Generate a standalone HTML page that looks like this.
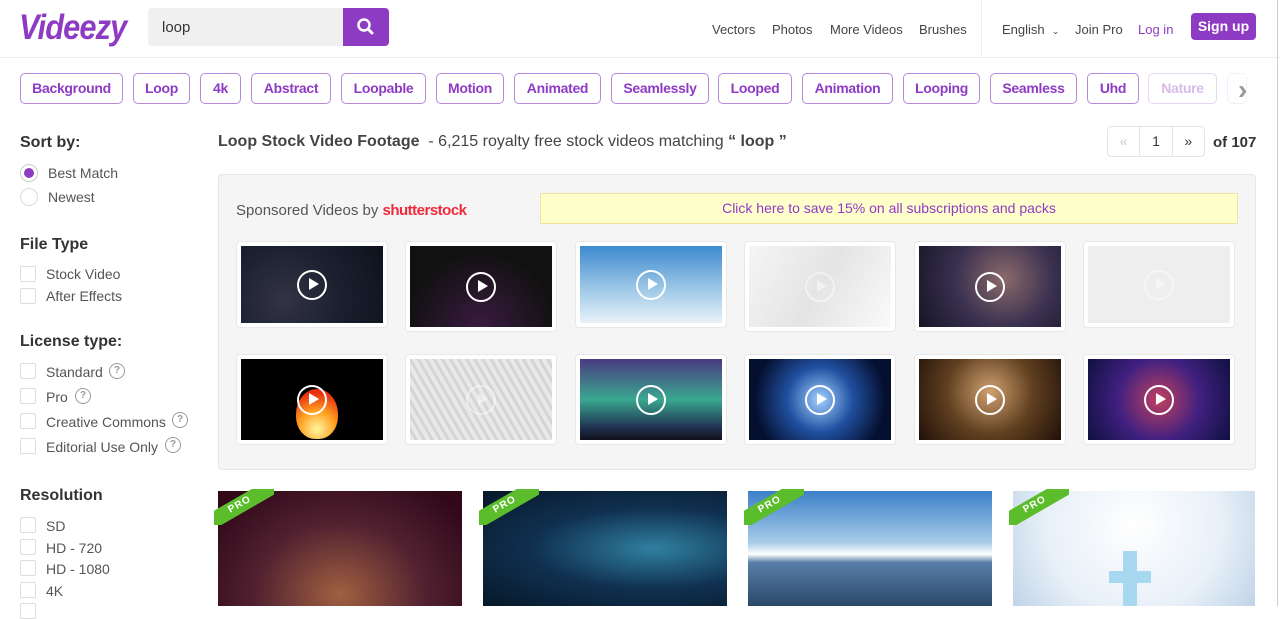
<!DOCTYPE html>
<html><head><meta charset="utf-8"><style>
*{box-sizing:border-box;margin:0;padding:0}
body{width:1280px;height:606px;overflow:hidden;background:#fff;font-family:"Liberation Sans",sans-serif;color:#444;position:relative}
.a{position:absolute}
.logo{left:19px;top:8px;font-size:35px;font-weight:bold;font-style:italic;color:#8e3bc4;letter-spacing:-1px;transform:scaleX(.88);transform-origin:left}
.search{left:148px;top:8px;width:196px;height:38px;background:#f0f0f0;border-radius:4px 0 0 4px;font-size:15px;color:#333;padding:11px 14px}
.sbtn{left:343px;top:8px;width:46px;height:38px;background:#8e3bc4;border-radius:0 4px 4px 0}
.nav{top:22px;font-size:13px;color:#444}
.hdrline{left:0;top:57px;width:1280px;height:1px;background:#eee}
.tag{top:73px;height:31px;border:1.5px solid #b888dd;border-radius:5px;color:#8e3bc4;font-weight:bold;font-size:14px;text-align:center;line-height:28px;letter-spacing:-.3px}
.h{font-weight:bold;font-size:16px;color:#333}
.lbl{font-size:14px;color:#555}
.cb{width:16px;height:16px;border:1px solid #ddd;border-radius:2px;background:#fff}
.q{width:16px;height:16px;border:1.5px solid #999;border-radius:50%;font-size:10px;text-align:center;line-height:13px;color:#999;font-weight:bold}
.thumb{width:152px;border:1px solid #e8e8e8;background:#fff;border-radius:4px;padding:4px}
.thumb div{width:100%;height:100%;position:relative}
.play{position:absolute;left:50%;top:50%;width:30px;height:30px;margin:-15px 0 0 -15px;border:2.5px solid #fff;border-radius:50%}
.play:after{content:"";position:absolute;left:10px;top:6px;border-left:10px solid #fff;border-top:6.5px solid transparent;border-bottom:6.5px solid transparent}
.card{top:491px;height:115px}
.pro{position:absolute;left:-4px;top:-2px;width:60px;height:36px;overflow:hidden}
.pro span{position:absolute;left:-14px;top:8px;width:80px;height:16px;background:#5cbd2c;color:#fff;font-size:10px;font-weight:bold;text-align:center;line-height:16px;transform:rotate(-30deg);letter-spacing:1px}
</style></head><body>
<div class="a logo">Videezy</div>
<div class="a search">loop</div>
<div class="a sbtn"><svg width="46" height="38"><circle cx="21" cy="17" r="5.5" stroke="#fff" stroke-width="2.5" fill="none"/><line x1="25" y1="21" x2="29" y2="25" stroke="#fff" stroke-width="3" stroke-linecap="round"/></svg></div>
<div class="a nav" style="left:712px">Vectors</div>
<div class="a nav" style="left:772px">Photos</div>
<div class="a nav" style="left:830px">More Videos</div>
<div class="a nav" style="left:919px">Brushes</div>
<div class="a" style="left:981px;top:0;width:1px;height:57px;background:#eee"></div>
<div class="a nav" style="left:1002px">English &nbsp;<span style="font-size:9px">&#8964;</span></div>
<div class="a nav" style="left:1075px">Join Pro</div>
<div class="a nav" style="left:1138px;color:#8e3bc4">Log in</div>
<div class="a" style="left:1191px;top:13px;width:65px;height:27px;background:#8e3bc4;border-radius:4px;color:#fff;font-weight:bold;font-size:14px;text-align:center;line-height:27px">Sign up</div>
<div class="a hdrline"></div>
<div class="a tag" style="left:20px;width:103px">Background</div>
<div class="a tag" style="left:133px;width:57px">Loop</div>
<div class="a tag" style="left:200px;width:41px">4k</div>
<div class="a tag" style="left:251px;width:80px">Abstract</div>
<div class="a tag" style="left:341px;width:85px">Loopable</div>
<div class="a tag" style="left:436px;width:68px">Motion</div>
<div class="a tag" style="left:514px;width:87px">Animated</div>
<div class="a tag" style="left:611px;width:98px">Seamlessly</div>
<div class="a tag" style="left:718px;width:74px">Looped</div>
<div class="a tag" style="left:802px;width:91px">Animation</div>
<div class="a tag" style="left:903px;width:77px">Looping</div>
<div class="a tag" style="left:990px;width:87px">Seamless</div>
<div class="a tag" style="left:1087px;width:52px">Uhd</div>
<div class="a tag" style="left:1148px;width:69px;opacity:.35">Nature</div>
<div class="a tag" style="left:1227px;width:20px;opacity:.15"></div>
<div class="a" style="left:1238px;top:74px;font-size:28px;color:#999;font-weight:bold">&#8250;</div>
<div class="a" style="left:1277px;top:0;width:1px;height:606px;background:#ccc"></div>

<div class="a h" style="left:20px;top:134px">Sort by:</div>
<div class="a" style="left:20px;top:164px;width:18px;height:18px;border:1px solid #ccc;border-radius:50%"><div style="margin:3px;width:10px;height:10px;border-radius:50%;background:#8e3bc4"></div></div>
<div class="a lbl" style="left:48px;top:165px">Best Match</div>
<div class="a" style="left:20px;top:188px;width:18px;height:18px;border:1px solid #ddd;border-radius:50%"></div>
<div class="a lbl" style="left:48px;top:189px">Newest</div>
<div class="a h" style="left:20px;top:236px">File Type</div>
<div class="a cb" style="left:20px;top:266px"></div><div class="a lbl" style="left:46px;top:266px">Stock Video</div>
<div class="a cb" style="left:20px;top:288px"></div><div class="a lbl" style="left:46px;top:288px">After Effects</div>
<div class="a h" style="left:20px;top:333px">License type:</div>
<div class="a cb" style="left:20px;top:363px"></div><div class="a lbl" style="left:46px;top:364px">Standard</div><div class="a q" style="left:109px;top:363px">?</div>
<div class="a cb" style="left:20px;top:388px"></div><div class="a lbl" style="left:46px;top:389px">Pro</div><div class="a q" style="left:75px;top:388px">?</div>
<div class="a cb" style="left:20px;top:413px"></div><div class="a lbl" style="left:46px;top:414px">Creative Commons</div><div class="a q" style="left:172px;top:412px">?</div>
<div class="a cb" style="left:20px;top:438px"></div><div class="a lbl" style="left:46px;top:439px">Editorial Use Only</div><div class="a q" style="left:165px;top:437px">?</div>
<div class="a h" style="left:20px;top:487px">Resolution</div>
<div class="a cb" style="left:20px;top:517px"></div><div class="a lbl" style="left:46px;top:518px">SD</div>
<div class="a cb" style="left:20px;top:539px"></div><div class="a lbl" style="left:46px;top:540px">HD - 720</div>
<div class="a cb" style="left:20px;top:560px"></div><div class="a lbl" style="left:46px;top:561px">HD - 1080</div>
<div class="a cb" style="left:20px;top:582px"></div><div class="a lbl" style="left:46px;top:583px">4K</div>
<div class="a cb" style="left:20px;top:603px"></div>

<div class="a" style="left:218px;top:133px;font-size:16px;color:#444"><b>Loop Stock Video Footage</b> &nbsp;- 6,215 royalty free stock videos matching <b>“ loop ”</b></div>
<div class="a" style="left:1107px;top:126px;width:98px;height:31px;border:1px solid #e5e5e5;border-radius:4px;display:flex;font-size:14px;color:#333">
<div style="width:32px;text-align:center;line-height:29px;color:#ccc">&laquo;</div><div style="width:34px;text-align:center;line-height:29px;border-left:1px solid #e5e5e5;border-right:1px solid #e5e5e5">1</div><div style="width:32px;text-align:center;line-height:29px">&raquo;</div></div>
<div class="a" style="left:1213px;top:134px;font-size:15px;font-weight:bold;color:#333">of 107</div>

<div class="a" style="left:218px;top:174px;width:1038px;height:296px;background:#f5f5f5;border:1px solid #e5e5e5;border-radius:4px"></div>
<div class="a" style="left:236px;top:202px;font-size:15px;color:#555">Sponsored Videos by <span style="color:#ee2b3b;font-weight:bold;letter-spacing:-.5px">shutterstock</span></div>
<div class="a" style="left:540px;top:193px;width:698px;height:31px;background:#ffffcc;border:1px solid #f0e3a0;color:#8e3bc4;font-size:14px;text-align:center;line-height:29px">Click here to save 15% on all subscriptions and packs</div>

<div class="a thumb" style="left:236px;top:241px;height:87px"><div style="background:radial-gradient(circle at 30% 70%,#334 0%,#1a2030 50%,#0d121c 100%)"><span class="play"></span></div></div>
<div class="a thumb" style="left:405px;top:241px;height:91px"><div style="background:radial-gradient(circle at 50% 100%,#3a1a40,#111 70%)"><span class="play"></span></div></div>
<div class="a thumb" style="left:575px;top:241px;height:87px"><div style="background:linear-gradient(180deg,#3d8ad0,#a5cce8 60%,#e8f2fa)"><span class="play"></span></div></div>
<div class="a thumb" style="left:744px;top:241px;height:91px"><div style="background:linear-gradient(120deg,#f5f5f5,#e4e4e4 50%,#fafafa)"><span class="play" style="opacity:.5"></span></div></div>
<div class="a thumb" style="left:914px;top:241px;height:91px"><div style="background:radial-gradient(circle at 60% 40%,#8a6a6a,#3a3050 50%,#151525)"><span class="play"></span></div></div>
<div class="a thumb" style="left:1083px;top:241px;height:87px"><div style="background:#eee"><span class="play" style="opacity:.5"></span></div></div>

<div class="a thumb" style="left:236px;top:354px;height:91px"><div style="background:#000"><div style="position:absolute;left:55px;top:30px;width:42px;height:50px;border-radius:50% 50% 45% 45%;background:radial-gradient(circle at 50% 80%,#fff8a0,#ffa020 40%,#e83010 80%)"></div><span class="play"></span></div></div>
<div class="a thumb" style="left:405px;top:354px;height:91px"><div style="background:repeating-linear-gradient(60deg,#e8e8e8 0 4px,#d4d4d4 4px 7px)"><span class="play" style="opacity:.5"></span></div></div>
<div class="a thumb" style="left:575px;top:354px;height:91px"><div style="background:linear-gradient(180deg,#4a3a80,#3aa890 50%,#203050 85%,#101018)"><span class="play"></span></div></div>
<div class="a thumb" style="left:744px;top:354px;height:91px"><div style="background:radial-gradient(circle,#a0d0ff,#2050a0 40%,#051030 80%)"><span class="play"></span></div></div>
<div class="a thumb" style="left:914px;top:354px;height:91px"><div style="background:radial-gradient(circle at 50% 40%,#d0a070,#604020 50%,#201008)"><span class="play"></span></div></div>
<div class="a thumb" style="left:1083px;top:354px;height:91px"><div style="background:radial-gradient(circle,#c04060,#402080 50%,#101040)"><span class="play"></span></div></div>

<div class="a card" style="left:218px;width:244px;background:radial-gradient(ellipse at 50% 90%,#a06040,#502030 50%,#300818 90%)"><div class="pro"><span>PRO</span></div></div>
<div class="a card" style="left:483px;width:244px;background:radial-gradient(ellipse at 70% 50%,#3080a0,#103050 50%,#061828)"><div class="pro"><span>PRO</span></div></div>
<div class="a card" style="left:748px;width:244px;background:linear-gradient(180deg,#3a80c8,#a8cce8 45%,#fff 55%,#5a7fa8 62%,#2a4868)"><div class="pro"><span>PRO</span></div></div>
<div class="a card" style="left:1013px;width:242px;background:radial-gradient(circle at 50% 30%,#fff,#e8f0f8 60%,#c0d4e8)"><div class="pro"><span>PRO</span></div><div style="position:absolute;left:110px;top:60px;width:14px;height:55px;background:#a8d8f0"></div><div style="position:absolute;left:96px;top:80px;width:42px;height:12px;background:#a8d8f0"></div></div>
</body></html>
